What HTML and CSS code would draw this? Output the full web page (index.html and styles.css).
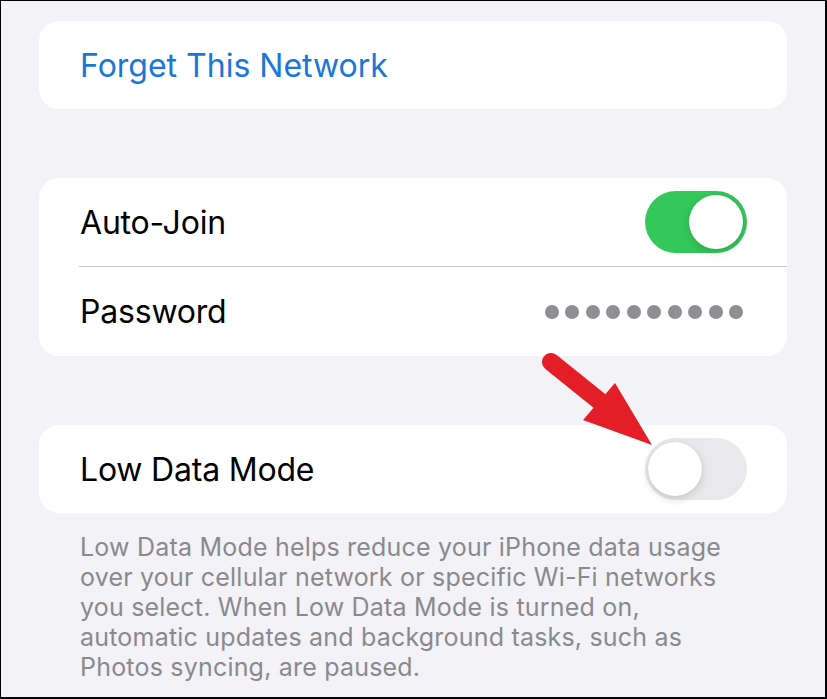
FILE: index.html
```html
<!DOCTYPE html>
<html lang="en">
<head>
<meta charset="utf-8">
<title>Wi-Fi Network Settings</title>
<link rel="stylesheet" href="styles.css">
</head>
<body>
<div class="frame">
  <section class="card">
    <div class="row">
      <span class="link">Forget This Network</span>
    </div>
  </section>

  <section class="card">
    <div class="row">
      <span class="label">Auto-Join</span>
      <span class="switch on"><span class="knob"></span></span>
    </div>
    <div class="sep"></div>
    <div class="row row-tall">
      <span class="label">Password</span>
      <span class="dots">
        <i></i><i></i><i></i><i></i><i></i><i></i><i></i><i></i><i></i><i></i>
      </span>
    </div>
  </section>

  <section class="card">
    <div class="row">
      <span class="label">Low Data Mode</span>
      <span class="switch off"><span class="knob"></span></span>
    </div>
  </section>
  <p class="footnote">Low Data Mode helps reduce your iPhone data usage over your cellular network or specific Wi-Fi networks you select. When Low Data Mode is turned on, automatic updates and background tasks, such as Photos syncing, are paused.</p>

  <svg class="arrow" width="120" height="100" viewBox="0 0 120 100" aria-hidden="true">
    <line x1="11" y1="12" x2="62" y2="53" stroke="#e31e26" stroke-width="18" stroke-linecap="round"/>
    <polygon points="43,70 75,33 112,95" fill="#e31e26"/>
  </svg>
</div>
</body>
</html>
```

FILE: styles.css
```css
html, body {
  margin: 0;
  padding: 0;
  background: #f2f2f7;
}

.frame {
  position: relative;
  box-sizing: border-box;
  width: 827px;
  height: 699px;
  overflow: hidden;
  border-style: solid;
  border-color: #000;
  border-width: 1px 2px 2px 1px;
  background: #f2f2f7;
  padding: 20px 38px 0 38px;
  font-family: Inter, "Noto Sans", "Liberation Sans", sans-serif;
  display: flex;
  flex-direction: column;
}

.card {
  width: 748px;
  background: #fff;
  border-radius: 20px;
  overflow: hidden;
  margin-bottom: 69px;
}

.card:nth-of-type(3) {
  margin-bottom: 0;
}

.row {
  height: 88px;
  display: flex;
  align-items: center;
  justify-content: space-between;
  padding: 0 40px 0 41px;
}

.row-tall {
  height: 89px;
}

.link {
  color: #1a76d8;
  font-size: 32px;
  letter-spacing: 0;
}

.label {
  color: #000;
  font-size: 32px;
  letter-spacing: -0.2px;
}

.sep {
  height: 1px;
  margin-left: 40px;
  background: #c8c8cc;
}

.switch {
  position: relative;
  width: 102px;
  height: 62px;
  border-radius: 31px;
  flex: none;
}

.switch.on {
  background: #34c759;
}

.switch.off {
  background: #e9e9eb;
}

.knob {
  position: absolute;
  top: 4px;
  width: 54px;
  height: 54px;
  border-radius: 50%;
  background: #fff;
  box-shadow: 0 3px 8px rgba(0, 0, 0, 0.15), 0 0 1px rgba(0, 0, 0, 0.12);
}

.switch.on .knob {
  right: 4px;
}

.switch.off .knob {
  left: 3px;
}

.dots {
  display: flex;
  gap: 6.5px;
  margin-right: 4px;
}

.dots i {
  display: block;
  width: 14px;
  height: 14px;
  border-radius: 50%;
  background: #8e8e93;
}

.footnote {
  margin: 19px 0 0 0;
  padding: 0 40px 0 41px;
  width: 667px;
  color: #8a8a8e;
  font-size: 25px;
  line-height: 30px;
  letter-spacing: 0.2px;
}

.arrow {
  position: absolute;
  left: 539px;
  top: 349px;
}
```
